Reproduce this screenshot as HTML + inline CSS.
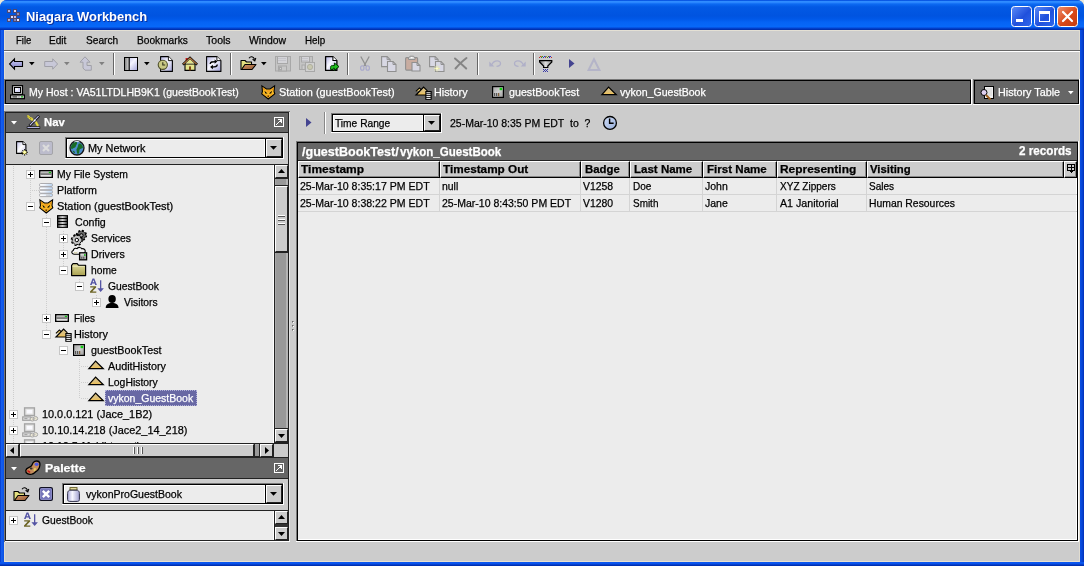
<!DOCTYPE html>
<html><head><meta charset="utf-8"><title>Niagara Workbench</title>
<style>
*{box-sizing:border-box;margin:0;padding:0}
html,body{width:1084px;height:566px;overflow:hidden;background:#ece9d8}
body{font-family:"Liberation Sans",sans-serif;font-size:11px;color:#000;position:relative}
.abs{position:absolute}
.t{white-space:nowrap;line-height:13px;font-size:11px;letter-spacing:-0.15px;filter:grayscale(1);-webkit-text-stroke:0.25px}
.w{color:#fff}
.b{font-weight:bold}
svg{display:block;overflow:visible}
.raised{background:#ccc;border-top:1px solid #fff;border-left:1px solid #fff;border-right:1px solid #222;border-bottom:1px solid #222}
.sunk{background:#ececec;border:2px solid #222}
.hc{background:#ccc;border-top:1px solid #fff;border-left:1px solid #fff;border-right:1px solid #000;border-bottom:1px solid #000;box-shadow:inset -1px -1px 0 #888}
</style></head><body>

<div class="abs " style="left:0px;top:0px;width:1084px;height:566px;background:#0a50e4;border-radius:7px 7px 0 0"></div>
<div class="abs " style="left:0px;top:30px;width:4px;height:536px;background:linear-gradient(90deg,#0236c8,#1560f0 40%,#0a4fe2)"></div>
<div class="abs " style="left:1080px;top:30px;width:4px;height:536px;background:linear-gradient(90deg,#0a4fe2,#0646d8 50%,#0230b8)"></div>
<div class="abs " style="left:0px;top:562px;width:1084px;height:4px;background:linear-gradient(#0a58f0,#0a52ea 45%,#0238c0 70%,#002aa4)"></div>
<div class="abs " style="left:0px;top:0px;width:1084px;height:30px;border-radius:7px 7px 0 0;background:linear-gradient(#0a55e0 0px,#0a5ae6 .6px,#2f8cff 1.5px,#2a86fe 2.5px,#0c6af2 4px,#0259e4 7px,#0054e0 16px,#0058e8 19px,#0563f4 22px,#0768f8 26.5px,#0550e0 27.8px,#0034b8 29px,#002ca8 30px)"></div>
<div class="abs" style="left:7px;top:9px"><svg width="14" height="14" viewBox="0 0 14 14" shape-rendering="crispEdges"><rect x="0" y="0" width="4" height="4" fill="#4c4870"/><rect x="1" y="1" width="2" height="2" fill="#b8b4e0"/><rect x="6" y="0" width="4" height="4" fill="#4c4870"/><rect x="7" y="1" width="2" height="2" fill="#dcdcf8"/><rect x="9" y="3" width="4" height="4" fill="#4c4870"/><rect x="10" y="4" width="2" height="2" fill="#8c88b8"/><rect x="3" y="6" width="4" height="4" fill="#4c4870"/><rect x="4" y="7" width="2" height="2" fill="#e0e0ff"/><rect x="6" y="6" width="4" height="4" fill="#4c4870"/><rect x="7" y="7" width="2" height="2" fill="#c0bce8"/><rect x="0" y="9" width="4" height="4" fill="#4c4870"/><rect x="1" y="10" width="2" height="2" fill="#b0ace0"/><rect x="6" y="9" width="4" height="4" fill="#4c4870"/><rect x="7" y="10" width="2" height="2" fill="#8884b4"/><rect x="9" y="9" width="4" height="4" fill="#4c4870"/><rect x="10" y="10" width="2" height="2" fill="#e8e8ff"/></svg></div>
<div class="abs" style="left:25.80px;top:8px;font-weight:bold;font-size:13.5px;line-height:18px;color:#fff;text-shadow:1px 1px 0 #0a2f9c;white-space:nowrap;transform-origin:0 0;transform:scaleX(0.9576)">Niagara Workbench</div>
<div class="abs" style="left:1011px;top:6px"><svg width="21" height="21" viewBox="0 0 21 21" ><defs><linearGradient id="g1" x1="0" y1="0" x2="1" y2="1"><stop offset="0" stop-color="#5c8cf8"/><stop offset="0.55" stop-color="#2050dc"/><stop offset="1" stop-color="#3068ec"/></linearGradient></defs><rect x=".5" y=".5" width="20" height="20" rx="3" fill="url(#g1)" stroke="#fff"/><rect x="5" y="13" width="7" height="3" fill="#fff"/></svg></div>
<div class="abs" style="left:1034px;top:6px"><svg width="21" height="21" viewBox="0 0 21 21" ><defs><linearGradient id="g2" x1="0" y1="0" x2="1" y2="1"><stop offset="0" stop-color="#5c8cf8"/><stop offset="0.55" stop-color="#2050dc"/><stop offset="1" stop-color="#3068ec"/></linearGradient></defs><rect x=".5" y=".5" width="20" height="20" rx="3" fill="url(#g2)" stroke="#fff"/><rect x="5.5" y="6.5" width="10" height="9" fill="none" stroke="#fff"/><rect x="5" y="5" width="11" height="3" fill="#fff"/></svg></div>
<div class="abs" style="left:1057px;top:6px"><svg width="21" height="21" viewBox="0 0 21 21" ><defs><linearGradient id="g3" x1="0" y1="0" x2="1" y2="1"><stop offset="0" stop-color="#f09070"/><stop offset="0.55" stop-color="#d84818"/><stop offset="1" stop-color="#c43c10"/></linearGradient></defs><rect x=".5" y=".5" width="20" height="20" rx="3" fill="url(#g3)" stroke="#fff"/><path d="M6 6L15 15M15 6L6 15" stroke="#fff" stroke-width="2.2" stroke-linecap="round"/></svg></div>
<div class="abs " style="left:4px;top:30px;width:1076px;height:532px;background:#ccc"></div>
<div class="abs " style="left:4px;top:30px;width:1076px;height:1px;background:#e4e0d4"></div>
<div class="abs " style="left:4px;top:561px;width:1076px;height:1px;background:#e8e0d0"></div>
<div class="abs " style="left:4px;top:30px;width:1px;height:532px;background:#e0dcd0"></div>
<div class="abs " style="left:1079px;top:30px;width:1px;height:532px;background:#e0dcd0"></div>
<div class="abs t " style="left:15.7px;top:33.99px;letter-spacing:0;transform-origin:0 0;transform:scaleX(0.8639);">File</div>
<div class="abs t " style="left:49.4px;top:33.99px;letter-spacing:0;transform-origin:0 0;transform:scaleX(0.9170);">Edit</div>
<div class="abs t " style="left:85.8px;top:33.99px;letter-spacing:0;transform-origin:0 0;transform:scaleX(0.9234);">Search</div>
<div class="abs t " style="left:136.5px;top:33.99px;letter-spacing:0;transform-origin:0 0;transform:scaleX(0.9236);">Bookmarks</div>
<div class="abs t " style="left:205.5px;top:33.99px;letter-spacing:0;transform-origin:0 0;transform:scaleX(0.9578);">Tools</div>
<div class="abs t " style="left:249.0px;top:33.99px;letter-spacing:0;transform-origin:0 0;transform:scaleX(0.9499);">Window</div>
<div class="abs t " style="left:304.8px;top:33.99px;letter-spacing:0;transform-origin:0 0;transform:scaleX(0.8936);">Help</div>
<div class="abs " style="left:4px;top:50px;width:1076px;height:1px;background:#666"></div>
<div class="abs " style="left:4px;top:51px;width:1076px;height:1px;background:#fff"></div>
<div class="abs" style="left:9px;top:58px"><svg width="15" height="12" viewBox="0 0 15 12" ><defs><linearGradient id="g4" x1="0" y1="0" x2="0" y2="1"><stop offset="0" stop-color="#d0d0ff"/><stop offset="0.5" stop-color="#a8a8e0"/><stop offset="1" stop-color="#7878b0"/></linearGradient></defs><path d="M0.6 6L5.5 0.8V3.5H13.5V8.5H5.5V11.2Z" fill="url(#g4)" stroke="#000" stroke-width="1.1" stroke-linejoin="miter"/></svg></div>
<div class="abs" style="left:29px;top:62px"><svg width="6" height="4"><path d="M0 0H5.6L2.8 3.3Z" fill="#000"/></svg></div>
<div class="abs" style="left:44px;top:58px"><svg width="15" height="12" viewBox="0 0 15 12" ><path d="M13.6 6L8.7 0.8V3.5H0.7V8.5H8.7V11.2Z" fill="#c8c8d8" stroke="#a0a0a8" stroke-width="1"/></svg></div>
<div class="abs" style="left:64px;top:62px"><svg width="6" height="4"><path d="M0 0H5.6L2.8 3.3Z" fill="#808080"/></svg></div>
<div class="abs" style="left:79px;top:56px"><svg width="14" height="15" viewBox="0 0 14 15" ><path d="M6 0.8L1 6.2H4V12L6 14.2H12.3V9.5H8V6.2H11Z" fill="#c8c8d8" stroke="#a0a0a8" stroke-width="1"/></svg></div>
<div class="abs" style="left:99px;top:62px"><svg width="6" height="4"><path d="M0 0H5.6L2.8 3.3Z" fill="#808080"/></svg></div>
<div class="abs " style="left:113px;top:53px;width:1px;height:22px;background:#666"></div>
<div class="abs " style="left:114px;top:53px;width:1px;height:22px;background:#fff"></div>
<div class="abs" style="left:124px;top:57px"><svg width="14" height="14" viewBox="0 0 14 14" ><defs><linearGradient id="g5" x1="0" y1="0" x2="1" y2="0"><stop offset="0" stop-color="#888"/><stop offset="1" stop-color="#d8d8d8"/></linearGradient></defs><defs><linearGradient id="g6" x1="0" y1="0" x2="1" y2="1"><stop offset="0" stop-color="#b8b8e8"/><stop offset="0.5" stop-color="#f4f4ff"/><stop offset="1" stop-color="#a8a8dc"/></linearGradient></defs><rect x=".5" y=".5" width="13" height="13" fill="url(#g6)" stroke="#000"/><rect x="1" y="1" width="4" height="12" fill="url(#g5)"/><path d="M5.2 0.5V13.5" stroke="#000" stroke-width="1.2"/></svg></div>
<div class="abs" style="left:144px;top:62px"><svg width="6" height="4"><path d="M0 0H5.6L2.8 3.3Z" fill="#000"/></svg></div>
<div class="abs" style="left:157px;top:56px"><svg width="16" height="17" viewBox="0 0 16 17" ><defs><linearGradient id="g7" x1="0" y1="0" x2="1" y2="1"><stop offset="0" stop-color="#b0b0e0"/><stop offset="0.45" stop-color="#f8f8ff"/><stop offset="1" stop-color="#a0a0d8"/></linearGradient></defs><g transform="translate(3,0)"><path d="M.6 .6H8.4 L12.4 4.6 V15.4 H.6Z" fill="url(#g7)" stroke="#000" stroke-width="1.1" stroke-linejoin="round"/><path d="M8.4 .6V4.6 H12.4" fill="#fff" stroke="#000" stroke-width="0.8800000000000001"/></g><circle cx="5.8" cy="8.8" r="4.6" fill="#c8c884" stroke="#50502c" stroke-width="1.1"/><path d="M5.8 6.2V9H8.2" stroke="#30301c" stroke-width="1.1" fill="none"/></svg></div>
<div class="abs" style="left:182px;top:57px"><svg width="16" height="15" viewBox="0 0 16 15" ><rect x="3.6" y="1" width="2.2" height="3.6" fill="#d01818"/><path d="M3 7H13V13.4H3Z" fill="#e4e48c" stroke="#000" stroke-width="1.1"/><path d="M.8 7.6L8 .9L15.2 7.6" fill="none" stroke="#000" stroke-width="2.3"/><path d="M1.3 7.2L8 1.1L14.7 7.2" fill="none" stroke="#b87840" stroke-width="1.1"/><path d="M8 2.3L3.6 6.4H12.4Z" fill="#e4e48c"/><rect x="7" y="9.4" width="2" height="4" fill="#804818"/></svg></div>
<div class="abs" style="left:206px;top:56px"><svg width="16" height="17" viewBox="0 0 16 17" ><defs><linearGradient id="g8" x1="0" y1="0" x2="1" y2="1"><stop offset="0" stop-color="#b0b0e0"/><stop offset="0.45" stop-color="#f8f8ff"/><stop offset="1" stop-color="#a0a0d8"/></linearGradient></defs><path d="M.6 .6H10.9 L14.9 4.6 V15.4 H.6Z" fill="url(#g8)" stroke="#000" stroke-width="1.1" stroke-linejoin="round"/><path d="M10.9 .6V4.6 H14.9" fill="#fff" stroke="#000" stroke-width="0.8800000000000001"/><path d="M4.2 8C4.2 5.8 6 5.6 10 5.6" fill="none" stroke="#000" stroke-width="1.3"/><path d="M8.6 3.4L11.4 5.6L8.6 7.8Z" fill="#000"/><path d="M11.3 8.5C11.3 10.8 9.5 11 5.5 11" fill="none" stroke="#000" stroke-width="1.3"/><path d="M6.9 8.8L4.1 11L6.9 13.2Z" fill="#000"/></svg></div>
<div class="abs " style="left:230px;top:53px;width:1px;height:22px;background:#666"></div>
<div class="abs " style="left:231px;top:53px;width:1px;height:22px;background:#fff"></div>
<div class="abs" style="left:240px;top:55px"><svg width="17" height="16" viewBox="0 0 17 16" ><defs><linearGradient id="g9" x1="0" y1="0" x2="1" y2="1"><stop offset="0" stop-color="#d89868"/><stop offset="1" stop-color="#8c5430"/></linearGradient></defs><path d="M1 5.5H5L6.5 7H11.5V14.5H1Z" fill="#e4e080" stroke="#000" stroke-width="1.1" stroke-linejoin="round"/><path d="M1.5 14.5L5 9.5H16L12 14.5Z" fill="url(#g9)" stroke="#000" stroke-width="1.1" stroke-linejoin="round"/><path d="M9 3.2C10.5 1 13.5 1.2 14.6 4.5" fill="none" stroke="#000" stroke-width="1.1"/><path d="M12.6 4.2L14.8 5.8L15.8 3" fill="none" stroke="#000" stroke-width="1.1"/></svg></div>
<div class="abs" style="left:261px;top:62px"><svg width="6" height="4"><path d="M0 0H5.6L2.8 3.3Z" fill="#000"/></svg></div>
<div class="abs" style="left:275px;top:56px"><svg width="16" height="16" viewBox="0 0 16 16" ><g fill="none" stroke="#a8a8a8"><rect x=".5" y=".5" width="15" height="14.5" fill="#c4c4c4"/><rect x="2.5" y=".5" width="10" height="7" fill="#d4d4d8"/><path d="M3.5 2.5H11.5M3.5 4.5H11.5" stroke="#b4b4bc" stroke-dasharray="1 1"/><rect x="3.5" y="10" width="8" height="5" fill="#c8c8c8"/><rect x="4.5" y="11" width="2" height="3.2" fill="#d8d8d8"/></g></svg></div>
<div class="abs" style="left:299px;top:56px"><svg width="16" height="16" viewBox="0 0 16 16" ><g fill="none" stroke="#a8a8a8"><rect x=".5" y=".5" width="13" height="13" fill="#c4c4c4"/><rect x="2.5" y=".5" width="8" height="5.5" fill="#d4d4d8"/><path d="M3.5 2.5H9.5M3.5 4.5H9.5" stroke="#b4b4bc" stroke-dasharray="1 1"/><rect x="3" y="9" width="3" height="4.5" fill="#ccc"/><rect x="6.5" y="6.5" width="9" height="9" fill="#d0d0d0"/><circle cx="11" cy="11" r="2.6" fill="#c8c8b0" stroke="#b0b0a0"/></g></svg></div>
<div class="abs" style="left:325px;top:56px"><svg width="16" height="16" viewBox="0 0 16 16" ><defs><linearGradient id="g11" x1="0" y1="0" x2="1" y2="1"><stop offset="0" stop-color="#b0b0e0"/><stop offset="0.45" stop-color="#f8f8ff"/><stop offset="1" stop-color="#a0a0d8"/></linearGradient></defs><path d="M.6 .6H7.9 L11.9 4.6 V14.4 H.6Z" fill="url(#g11)" stroke="#000" stroke-width="1.3" stroke-linejoin="round"/><path d="M7.9 .6V4.6 H11.9" fill="#fff" stroke="#000" stroke-width="1.04"/><path d="M5.6 13.5V11.3C5.6 10 6.4 9.6 7.4 9.6H9.4V7L14 10.6L9.4 14.4V12.2H8.2V13.5Z" fill="#20c020" stroke="#003800" stroke-width="1"/></svg></div>
<div class="abs " style="left:347px;top:53px;width:1px;height:22px;background:#666"></div>
<div class="abs " style="left:348px;top:53px;width:1px;height:22px;background:#fff"></div>
<div class="abs" style="left:360px;top:56px"><svg width="10" height="15" viewBox="0 0 10 15" ><path d="M0.8 0.5L6 10M9.2 0.5L4 10" stroke="#909090" stroke-width="1.3" fill="none"/><ellipse cx="2.3" cy="12" rx="1.7" ry="2.3" fill="none" stroke="#a8a8cc" stroke-width="1.1"/><ellipse cx="7.7" cy="12" rx="1.7" ry="2.3" fill="none" stroke="#a8a8cc" stroke-width="1.1"/></svg></div>
<div class="abs" style="left:381px;top:56px"><svg width="16" height="16" viewBox="0 0 16 16" ><path d="M0.6 0.6H6.1L9.1 3.6V10.6H0.6Z" fill="#d8d8e4" stroke="#909090" stroke-width="1.1"/><path d="M6.1 0.6V3.6H9.1" fill="none" stroke="#909090" stroke-width="1"/><path d="M6.5 5.5H12.0L15.0 8.5V15.5H6.5Z" fill="#d8d8e4" stroke="#909090" stroke-width="1.1"/><path d="M12.0 5.5V8.5H15.0" fill="none" stroke="#909090" stroke-width="1"/></svg></div>
<div class="abs" style="left:405px;top:55px"><svg width="16" height="17" viewBox="0 0 16 17" ><rect x=".6" y="2.6" width="12" height="12.5" rx="1" fill="#c8aca0" stroke="#909090" stroke-width="1.1"/><path d="M3.5 4.5V3L5 1.2H8.5L10 3V4.5Z" fill="#d8d8d8" stroke="#909090"/><rect x="6" y="2" width="1.5" height="1.2" fill="#fff"/><path d="M7 7.5H12L15 10.5V16.0H7Z" fill="#d8d8e4" stroke="#909090" stroke-width="1.1"/><path d="M12 7.5V10.5H15" fill="none" stroke="#909090" stroke-width="1"/></svg></div>
<div class="abs" style="left:429px;top:56px"><svg width="16" height="16" viewBox="0 0 16 16" ><path d="M0.6 0.6H6.1L9.1 3.6V10.6H0.6Z" fill="#d8d8e4" stroke="#909090" stroke-width="1.1"/><path d="M6.1 0.6V3.6H9.1" fill="none" stroke="#909090" stroke-width="1"/><path d="M6.5 5.5H12.0L15.0 8.5V15.5H6.5Z" fill="#d8d8e4" stroke="#909090" stroke-width="1.1"/><path d="M12.0 5.5V8.5H15.0" fill="none" stroke="#909090" stroke-width="1"/><path d="M8 9.5V15.5M5 12.5H11M5.8 10.3L10.2 14.7M10.2 10.3L5.8 14.7" stroke="#e8e8b0" stroke-width="1"/><circle cx="8" cy="12.5" r="1" fill="#ffffd0"/></svg></div>
<div class="abs" style="left:454px;top:57px"><svg width="14" height="13" viewBox="0 0 14 13" ><path d="M1 1.5C4 4 9 8.5 12.2 11.5M12.5 1C9 3.5 5 7.5 1.5 11.5" stroke="#848484" stroke-width="2" fill="none" stroke-linecap="round"/></svg></div>
<div class="abs " style="left:477px;top:53px;width:1px;height:22px;background:#666"></div>
<div class="abs " style="left:478px;top:53px;width:1px;height:22px;background:#fff"></div>
<div class="abs" style="left:489px;top:59px"><svg width="13" height="8" viewBox="0 0 13 8" ><path d="M3 5.5C5 0.8 11.5 1 11.5 4.5C11.5 6.5 9.5 7.3 7.5 7.3" fill="none" stroke="#b0b0c8" stroke-width="1.3"/><path d="M0.3 2.5V7.5H5.3Z" fill="#b0b0c8"/></svg></div>
<div class="abs" style="left:513px;top:59px"><svg width="13" height="8" viewBox="0 0 13 8" ><path d="M10 5.5C8 0.8 1.5 1 1.5 4.5C1.5 6.5 3.5 7.3 5.5 7.3" fill="none" stroke="#b0b0c8" stroke-width="1.3"/><path d="M12.7 2.5V7.5H7.7Z" fill="#b0b0c8"/></svg></div>
<div class="abs " style="left:533px;top:53px;width:1px;height:22px;background:#666"></div>
<div class="abs " style="left:534px;top:53px;width:1px;height:22px;background:#fff"></div>
<div class="abs" style="left:539px;top:56px"><svg width="14" height="17" viewBox="0 0 14 17" ><defs><linearGradient id="g12" x1="0" y1="0" x2="1" y2="0"><stop offset="0" stop-color="#707070"/><stop offset="0.5" stop-color="#e0e0e0"/><stop offset="1" stop-color="#909090"/></linearGradient></defs><g shape-rendering="crispEdges"><rect x="0" y="1" width="1" height="1" fill="#c03030"/><rect x="1" y="0" width="1" height="1" fill="#c03030"/><rect x="2" y="1" width="1" height="1" fill="#308030"/><rect x="3" y="0" width="1" height="1" fill="#308030"/><rect x="4" y="1" width="1" height="1" fill="#3030c0"/><rect x="5" y="0" width="1" height="1" fill="#3030c0"/><rect x="6" y="1" width="1" height="1" fill="#c03030"/><rect x="7" y="0" width="1" height="1" fill="#c08030"/><rect x="8" y="1" width="1" height="1" fill="#308030"/><rect x="9" y="0" width="1" height="1" fill="#308030"/><rect x="10" y="1" width="1" height="1" fill="#3030c0"/><rect x="11" y="0" width="1" height="1" fill="#3030c0"/><rect x="12" y="1" width="1" height="1" fill="#c03030"/><rect x="2" y="0" width="1" height="1" fill="#b0b030"/><rect x="6" y="0" width="1" height="1" fill="#30a0a0"/><rect x="10" y="0" width="1" height="1" fill="#a030a0"/><rect x="4" y="13" width="1" height="1" fill="#3838a8"/><rect x="6" y="13" width="1" height="1" fill="#3838a8"/><rect x="8" y="13" width="1" height="1" fill="#3838a8"/><rect x="5" y="14" width="1" height="1" fill="#3838a8"/><rect x="7" y="14" width="1" height="1" fill="#3838a8"/><rect x="4" y="15" width="1" height="1" fill="#3838a8"/><rect x="6" y="15" width="1" height="1" fill="#3838a8"/><rect x="8" y="15" width="1" height="1" fill="#3838a8"/></g><path d="M0.6 4.6H12.8V6L8.8 10V11.5H4.6V10L0.6 6Z" fill="url(#g12)" stroke="#000" stroke-width="1.2"/></svg></div>
<div class="abs" style="left:569px;top:59px"><svg width="6" height="9" viewBox="0 0 6 9" ><path d="M0 0V9L5.5 4.5Z" fill="#444490"/></svg></div>
<div class="abs" style="left:587px;top:57px"><svg width="14" height="14" viewBox="0 0 14 14" ><path d="M7 2.2L1.6 13H12.4Z" fill="none" stroke="#b4b4c8" stroke-width="2" stroke-linejoin="miter"/></svg></div>
<div class="abs " style="left:4px;top:79px;width:968px;height:26px;background:#fff"></div>
<div class="abs " style="left:4px;top:79px;width:967px;height:25px;background:#777"></div>
<div class="abs " style="left:5px;top:80px;width:966px;height:24px;background:#000"></div>
<div class="abs " style="left:6px;top:81px;width:964px;height:22px;background:#666"></div>
<div class="abs " style="left:973px;top:79px;width:107px;height:26px;background:#fff"></div>
<div class="abs " style="left:973px;top:79px;width:106px;height:25px;background:#777"></div>
<div class="abs " style="left:974px;top:80px;width:105px;height:24px;background:#000"></div>
<div class="abs " style="left:975px;top:81px;width:103px;height:22px;background:#666"></div>
<div class="abs" style="left:10px;top:85px"><svg width="15" height="15" viewBox="0 0 15 15" ><rect x="2.5" y=".6" width="10" height="8.8" fill="#d4d4d4" stroke="#000" stroke-width="1.2"/><rect x="4.5" y="2.5" width="6" height="5" fill="#d8d8f8" stroke="#000" stroke-width="1"/><rect x="5.4" y="3.3" width="2.6" height="2" fill="#fff"/><rect x=".6" y="10" width="13.8" height="3.7" fill="#dcdcdc" stroke="#000" stroke-width="1.2"/><rect x="2.4" y="11.4" width="4.6" height="1" fill="#202020"/><rect x="7.6" y="11.4" width="2.6" height="1" fill="#a0a0a0"/><rect x="11" y="11.2" width="2" height="1.3" fill="#10b010"/></svg></div>
<div class="abs t w" style="left:28.8px;top:85.99px;letter-spacing:0;transform-origin:0 0;transform:scaleX(0.9577);">My Host : VA51LTDLHB9K1 (guestBookTest)</div>
<div class="abs" style="left:260.6px;top:84.6px"><svg width="14.5" height="14.5" viewBox="0 0 16 16" ><path d="M1 1L6 4.4H10L15 1L14.4 7L15.2 9.8L8 15.4L.8 9.8L1.6 7Z" fill="#f8b824" stroke="#000" stroke-width="1.2" stroke-linejoin="miter"/><path d="M2.2 2.8L4.6 5L2.6 6Z" fill="#e48c18"/><path d="M13.8 2.8L11.4 5L13.4 6Z" fill="#e48c18"/><path d="M5.5 5.6H10.5L9 8H7Z" fill="#f0a020"/><path d="M3.8 6.3L7.2 9.4H4.8Z" fill="#000"/><path d="M12.2 6.3L8.8 9.4H11.2Z" fill="#000"/><path d="M3 10.4L8 12L13 10.4" fill="none" stroke="#e89c1c" stroke-width=".9"/><rect x="7.2" y="11.6" width="1.6" height="1.8" fill="#5c2c0c"/></svg></div>
<div class="abs t w" style="left:278.7px;top:85.99px;letter-spacing:0;transform-origin:0 0;transform:scaleX(0.9900);">Station (guestBookTest)</div>
<div class="abs" style="left:415px;top:84px"><svg width="17" height="17" viewBox="0 0 17 17" ><defs><linearGradient id="g13" x1="0" y1="0" x2="0" y2="1"><stop offset="0" stop-color="#d8c084"/><stop offset="0.6" stop-color="#dcc07c"/><stop offset="1" stop-color="#f4c450"/></linearGradient></defs><path d="M.9 7.4L4.4 3.9L7 6.4" fill="#e4c870" stroke="#000" stroke-width="1.1"/><path d="M1 11L8.6 3L12 6.4V11Z" fill="url(#g13)" stroke="#000" stroke-width="1.2" stroke-linejoin="miter"/><rect x="10.3" y="7" width="6.4" height="8.8" fill="#000"/><rect x="11.4" y="8.2" width="4.2" height="1.1" fill="#e4e4e4"/><rect x="11.4" y="10.1" width="4.2" height="1.1" fill="#e4e4e4"/><rect x="11.4" y="12" width="4.2" height="1.1" fill="#e4e4e4"/><rect x="11.4" y="13.9" width="4.2" height="1.1" fill="#e4e4e4"/></svg></div>
<div class="abs t w" style="left:434.4px;top:85.99px;letter-spacing:0;transform-origin:0 0;transform:scaleX(0.9822);">History</div>
<div class="abs" style="left:492px;top:86px"><svg width="12" height="12" viewBox="0 0 12 12" ><defs><linearGradient id="g14" x1="0" y1="0" x2="1" y2="1"><stop offset="0" stop-color="#a0a0a0"/><stop offset="0.5" stop-color="#d0d0d0"/><stop offset="1" stop-color="#989898"/></linearGradient></defs><rect x=".6" y=".6" width="10.8" height="10.8" fill="url(#g14)" stroke="#000" stroke-width="1.2"/><rect x="7.6" y="1.8" width="2.6" height="2.4" fill="#10d010"/><rect x="2.2" y="7" width="1" height="3.2" fill="#383838"/><rect x="4.2" y="7" width="1" height="3.2" fill="#383838"/><rect x="6.2" y="7" width="1" height="3.2" fill="#704818"/></svg></div>
<div class="abs t w" style="left:508.8px;top:85.99px;letter-spacing:0;transform-origin:0 0;transform:scaleX(0.9728);">guestBookTest</div>
<div class="abs" style="left:601px;top:86px"><svg width="16" height="10" viewBox="0 0 16 10" ><defs><linearGradient id="g15" x1="0" y1="0" x2="0" y2="1"><stop offset="0" stop-color="#d4bc80"/><stop offset="0.6" stop-color="#dcc07c"/><stop offset="1" stop-color="#f4c04c"/></linearGradient></defs><path d="M.9 8.7L7.6 1.1L15.3 8.7Z" fill="url(#g15)" stroke="#000" stroke-width="1.2" stroke-linejoin="miter"/></svg></div>
<div class="abs t w" style="left:620.0px;top:85.99px;letter-spacing:0;transform-origin:0 0;transform:scaleX(0.9606);">vykon_GuestBook</div>
<div class="abs" style="left:980px;top:86px"><svg width="15" height="15" viewBox="0 0 15 15" ><rect x="4.5" y=".5" width="9" height="12" fill="#f0f0f0" stroke="#000"/><path d="M6 3H12M6 5H12M6 7H12M6 9H12" stroke="#d0d0d0"/><circle cx="4" cy="6.5" r="3" fill="#e0d0f0" stroke="#000"/><path d="M6 9L10.5 13.5" stroke="#a06020" stroke-width="2"/></svg></div>
<div class="abs t w" style="left:997.8px;top:85.99px;letter-spacing:0;transform-origin:0 0;transform:scaleX(0.9785);">History Table</div>
<div class="abs" style="left:1068px;top:91px"><svg width="6" height="4"><path d="M0 0H5.6L2.8 3.2Z" fill="#fff"/></svg></div>
<div class="abs " style="left:4px;top:111px;width:286px;height:1px;background:#777"></div>
<div class="abs " style="left:4px;top:111px;width:1px;height:431px;background:#777"></div>
<div class="abs " style="left:5px;top:112px;width:284px;height:21px;background:#666;border:1px solid #222"></div>
<div class="abs" style="left:11px;top:121px"><svg width="6" height="4"><path d="M0 0H6L3 3.5Z" fill="#fff"/></svg></div>
<div class="abs" style="left:26px;top:115px"><svg width="15" height="14" viewBox="0 0 15 14" ><path d="M1.2 1.2C4 1.5 2.5 4 5.5 3.5C7 5 6 6 8 6.5" stroke="#e8dc40" stroke-width="2.2" fill="none"/><path d="M1.2 1.2C4 1.5 2.5 4 5.5 3.5" stroke="#605000" stroke-width=".6" fill="none" stroke-dasharray="1 1"/><path d="M9.5 7C11.5 8 10 10 12.5 10.8" stroke="#e8dc40" stroke-width="2.2" fill="none"/><path d="M13 .8L3.4 10.8" stroke="#000" stroke-width="2.6"/><path d="M12.6 1.2L3.8 10.4" stroke="#c4c4f4" stroke-width="1.2"/><circle cx="8.6" cy="5.4" r="1" fill="#fff"/><path d="M.8 12.6H14.2" stroke="#000" stroke-width="2.2"/><path d="M1.4 12.5H13.6" stroke="#c4c4f8" stroke-width=".9"/></svg></div>
<div class="abs t w b" style="left:44.3px;top:115.99px;letter-spacing:0;transform-origin:0 0;transform:scaleX(1.0255);">Nav</div>
<div class="abs" style="left:274px;top:117px"><svg width="10" height="10" viewBox="0 0 10 10" ><g shape-rendering="crispEdges"><rect x=".5" y=".5" width="9" height="9" fill="#666" stroke="#fff"/><rect x="2" y="7" width="1" height="1" fill="#fff"/><rect x="3" y="6" width="1" height="1" fill="#fff"/><rect x="4" y="5" width="1" height="1" fill="#fff"/><rect x="5" y="4" width="1" height="1" fill="#fff"/><rect x="6" y="3" width="1" height="1" fill="#fff"/><rect x="4" y="2" width="1" height="1" fill="#fff"/><rect x="5" y="2" width="1" height="1" fill="#fff"/><rect x="6" y="2" width="1" height="1" fill="#fff"/><rect x="7" y="2" width="1" height="1" fill="#fff"/><rect x="7" y="3" width="1" height="1" fill="#fff"/><rect x="7" y="4" width="1" height="1" fill="#fff"/><rect x="7" y="5" width="1" height="1" fill="#fff"/><rect x="6" y="4" width="1" height="1" fill="#fff"/></g></svg></div>
<div class="abs " style="left:5px;top:133px;width:1px;height:408px;background:#222"></div>
<div class="abs " style="left:288px;top:133px;width:1px;height:408px;background:#222"></div>
<div class="abs " style="left:289px;top:112px;width:1px;height:429px;background:#e4e4e4"></div>
<div class="abs" style="left:16px;top:141px"><svg width="13" height="15" viewBox="0 0 13 15" ><defs><linearGradient id="g16" x1="0" y1="0" x2="1" y2="1"><stop offset="0" stop-color="#c0c0e8"/><stop offset="0.5" stop-color="#fff"/><stop offset="1" stop-color="#b8b8e0"/></linearGradient></defs><path d="M.6 .6H6.9 L9.9 3.6 V12.4 H.6Z" fill="url(#g16)" stroke="#000" stroke-width="1.1" stroke-linejoin="round"/><path d="M6.9 .6V3.6 H9.9" fill="#fff" stroke="#000" stroke-width="0.8800000000000001"/><path d="M8.6 8V14.6M5.3 11.3H11.9M6.3 9L10.9 13.6M10.9 9L6.3 13.6" stroke="#000" stroke-width=".9"/><path d="M8.6 9.3V13.3M6.6 11.3H10.6M7.3 10L9.9 12.6M9.9 10L7.3 12.6" stroke="#f0e850" stroke-width="1"/><circle cx="8.6" cy="11.3" r="1.2" fill="#ffffc0"/></svg></div>
<div class="abs" style="left:39px;top:141px"><svg width="14" height="14" viewBox="0 0 14 14" ><rect x=".5" y=".5" width="13" height="13" rx="1.5" fill="#bcbccc" stroke="#a4a4a8"/><path d="M4 4L10 10M10 4L4 10" stroke="#dcdcdc" stroke-width="2.2"/></svg></div>
<div class="abs " style="left:65px;top:137px;width:218px;height:21px;background:#777"></div>
<div class="abs " style="left:66px;top:138px;width:217px;height:20px;background:#000"></div>
<div class="abs " style="left:67px;top:139px;width:215px;height:18px;background:#ececec;border-top:1px solid #fff;border-left:1px solid #fff"></div>
<div class="abs " style="left:65px;top:158px;width:219px;height:1px;background:#fff"></div>
<div class="abs " style="left:283px;top:137px;width:1px;height:22px;background:#fff"></div>
<div class="abs " style="left:264px;top:139px;width:1px;height:18px;background:#fff"></div>
<div class="abs " style="left:265px;top:139px;width:1px;height:18px;background:#000"></div>
<div class="abs raised" style="left:266px;top:139px;width:16px;height:18px;"></div>
<div class="abs" style="left:270px;top:146px"><svg width="7" height="4"><path d="M0 0H7L3.5 3.7Z" fill="#000"/></svg></div>
<div class="abs" style="left:69px;top:140px"><svg width="16" height="16" viewBox="0 0 16 16" ><circle cx="8" cy="8" r="7" fill="#4c8ccc" stroke="#181818" stroke-width="1.3"/><path d="M3 4.6C4 2.3 7 1.4 8 2.4C8.6 4.4 6.6 5 6.6 7C5 8.6 3.4 8 3 9.6C1.4 8.6 1.8 6 3 4.6Z" fill="#186c28"/><path d="M9.6 3.8C11.6 2.8 13.6 4.8 14 7.4C13.2 9 11.6 8 10.6 9.6C10 11.6 11 13 9 14.2C7.4 13.6 8 11 7.4 9.6C8.4 8 9 6 9.6 3.8Z" fill="#186c28"/><path d="M3.6 10.8C5 10.4 6 11.6 6 13.2C5 13.2 4 12.2 3.6 10.8Z" fill="#186c28"/><path d="M5.4 1.9C7 1.2 9 1.2 10.4 1.9" stroke="#e8f4ff" stroke-width="1" fill="none"/></svg></div>
<div class="abs t " style="left:88.3px;top:141.99px;letter-spacing:0;transform-origin:0 0;transform:scaleX(0.9891);">My Network</div>
<div class="abs " style="left:6px;top:164px;width:282px;height:1px;background:#222"></div>
<div class="abs " style="left:6px;top:165px;width:267px;height:278px;background:#ececec"></div>
<div class="abs " style="left:273px;top:165px;width:1px;height:278px;background:#fff"></div>
<div class="abs " style="left:274px;top:165px;width:1px;height:278px;background:#222"></div>
<div class="abs " style="left:13px;top:165px;width:1px;height:278px;background:repeating-linear-gradient(#ececec 0 1px,#cdcdcd 1px 2px)"></div>
<div class="abs " style="left:30px;top:165px;width:1px;height:41px;background:repeating-linear-gradient(#ececec 0 1px,#cdcdcd 1px 2px)"></div>
<div class="abs " style="left:46px;top:214px;width:1px;height:120px;background:repeating-linear-gradient(#ececec 0 1px,#cdcdcd 1px 2px)"></div>
<div class="abs " style="left:63px;top:230px;width:1px;height:40px;background:repeating-linear-gradient(#ececec 0 1px,#cdcdcd 1px 2px)"></div>
<div class="abs " style="left:79px;top:278px;width:1px;height:8px;background:repeating-linear-gradient(#ececec 0 1px,#cdcdcd 1px 2px)"></div>
<div class="abs " style="left:96px;top:294px;width:1px;height:8px;background:repeating-linear-gradient(#ececec 0 1px,#cdcdcd 1px 2px)"></div>
<div class="abs " style="left:79px;top:358px;width:1px;height:40px;background:repeating-linear-gradient(#ececec 0 1px,#cdcdcd 1px 2px)"></div>
<div class="abs " style="left:80px;top:366px;width:8px;height:1px;background:repeating-linear-gradient(90deg,#ececec 0 1px,#cdcdcd 1px 2px)"></div>
<div class="abs " style="left:80px;top:382px;width:8px;height:1px;background:repeating-linear-gradient(90deg,#ececec 0 1px,#cdcdcd 1px 2px)"></div>
<div class="abs " style="left:80px;top:398px;width:8px;height:1px;background:repeating-linear-gradient(90deg,#ececec 0 1px,#cdcdcd 1px 2px)"></div>
<div class="abs " style="left:31px;top:190px;width:8px;height:1px;background:repeating-linear-gradient(90deg,#ececec 0 1px,#cdcdcd 1px 2px)"></div>
<div class="abs" style="left:26px;top:170px"><svg width="9" height="9"><rect x=".5" y=".5" width="8" height="8" fill="#fff" stroke="#999" stroke-dasharray="1 1"/><path d="M2 4.5H7 M4.5 2V7" stroke="#000" stroke-width="1" fill="none" shape-rendering="crispEdges"/></svg></div>
<div class="abs" style="left:39px;top:170px"><svg width="14" height="8" viewBox="0 0 14 8" ><rect x=".7" y=".7" width="12.6" height="6.6" fill="#b4b4b4" stroke="#000" stroke-width="1.4"/><rect x="1.6" y="1.5" width="10.8" height="2" fill="#b8b8b8"/><rect x="1.6" y="4.6" width="10.8" height="2" fill="#e4e4e4"/><path d="M2 4.1H12" stroke="#484848" stroke-width="1"/><rect x="9.8" y="1.8" width="2.2" height="1.3" fill="#10c010"/></svg></div>
<div class="abs t " style="left:57.3px;top:167.99px;letter-spacing:0;transform-origin:0 0;transform:scaleX(0.9430);">My File System</div>
<div class="abs" style="left:38px;top:182px"><svg width="16" height="16" viewBox="0 0 16 16" ><defs><linearGradient id="g17" x1="0" y1="0" x2="1" y2="0"><stop offset="0" stop-color="#ffffff"/><stop offset="0.35" stop-color="#f4f8ff"/><stop offset="1" stop-color="#b8d4f4"/></linearGradient></defs><rect x="1.5" y="1.5" width="13" height="2.9" rx="1.2" fill="url(#g17)" stroke="#a4a4a8" stroke-width=".9"/><rect x="1.5" y="4.9" width="13" height="2.9" rx="1.2" fill="url(#g17)" stroke="#a4a4a8" stroke-width=".9"/><rect x="1.5" y="8.3" width="13" height="2.9" rx="1.2" fill="url(#g17)" stroke="#a4a4a8" stroke-width=".9"/><rect x="1.5" y="11.7" width="13" height="2.9" rx="1.2" fill="url(#g17)" stroke="#a4a4a8" stroke-width=".9"/><path d="M8.5 13.2H12" stroke="#c0a890" stroke-width="1" stroke-dasharray="1 1"/></svg></div>
<div class="abs t " style="left:57.3px;top:183.99px;letter-spacing:0;transform-origin:0 0;transform:scaleX(0.9713);">Platform</div>
<div class="abs" style="left:26px;top:202px"><svg width="9" height="9"><rect x=".5" y=".5" width="8" height="8" fill="#fff" stroke="#999" stroke-dasharray="1 1"/><path d="M2 4.5H7" stroke="#000" stroke-width="1" fill="none" shape-rendering="crispEdges"/></svg></div>
<div class="abs" style="left:39px;top:199px"><svg width="14.5" height="14.5" viewBox="0 0 16 16" ><path d="M1 1L6 4.4H10L15 1L14.4 7L15.2 9.8L8 15.4L.8 9.8L1.6 7Z" fill="#f8b824" stroke="#000" stroke-width="1.2" stroke-linejoin="miter"/><path d="M2.2 2.8L4.6 5L2.6 6Z" fill="#e48c18"/><path d="M13.8 2.8L11.4 5L13.4 6Z" fill="#e48c18"/><path d="M5.5 5.6H10.5L9 8H7Z" fill="#f0a020"/><path d="M3.8 6.3L7.2 9.4H4.8Z" fill="#000"/><path d="M12.2 6.3L8.8 9.4H11.2Z" fill="#000"/><path d="M3 10.4L8 12L13 10.4" fill="none" stroke="#e89c1c" stroke-width=".9"/><rect x="7.2" y="11.6" width="1.6" height="1.8" fill="#5c2c0c"/></svg></div>
<div class="abs t " style="left:57.3px;top:199.99px;letter-spacing:0;transform-origin:0 0;transform:scaleX(0.9952);">Station (guestBookTest)</div>
<div class="abs" style="left:42px;top:218px"><svg width="9" height="9"><rect x=".5" y=".5" width="8" height="8" fill="#fff" stroke="#999" stroke-dasharray="1 1"/><path d="M2 4.5H7" stroke="#000" stroke-width="1" fill="none" shape-rendering="crispEdges"/></svg></div>
<div class="abs" style="left:55px;top:214px"><svg width="16" height="16" viewBox="0 0 16 16" ><defs><linearGradient id="g18" x1="0" y1="0" x2="1" y2="0"><stop offset="0" stop-color="#383838"/><stop offset="0.3" stop-color="#a8a8a8"/><stop offset="0.5" stop-color="#d4d4d4"/><stop offset="0.7" stop-color="#a8a8a8"/><stop offset="1" stop-color="#383838"/></linearGradient></defs><rect x="2" y="1.1" width="11" height="12.8" fill="#000"/><rect x="3" y="2.1" width="9" height="1.95" fill="url(#g18)"/><rect x="3" y="5.05" width="9" height="1.95" fill="url(#g18)"/><rect x="3" y="8" width="9" height="1.95" fill="url(#g18)"/><rect x="3" y="10.95" width="9" height="1.95" fill="url(#g18)"/></svg></div>
<div class="abs t " style="left:74.7px;top:215.99px;letter-spacing:0;transform-origin:0 0;transform:scaleX(0.9657);">Config</div>
<div class="abs" style="left:59px;top:234px"><svg width="9" height="9"><rect x=".5" y=".5" width="8" height="8" fill="#fff" stroke="#999" stroke-dasharray="1 1"/><path d="M2 4.5H7 M4.5 2V7" stroke="#000" stroke-width="1" fill="none" shape-rendering="crispEdges"/></svg></div>
<div class="abs" style="left:71px;top:230px"><svg width="17" height="16" viewBox="0 0 17 16" ><circle cx="10.4" cy="5.4" r="4.800000000000001" fill="none" stroke="#000" stroke-width="1.8" stroke-dasharray="1.885 1.885"/><circle cx="10.4" cy="5.4" r="4.2" fill="#6c6c6c" stroke="#000" stroke-width="1"/><circle cx="10.4" cy="5.4" r="3.5000000000000004" fill="none" stroke="#6c6c6c" stroke-width="1.4" stroke-dasharray="1.508 1.508"/><circle cx="10.4" cy="5.4" r="1.7" fill="#b0b0b0" stroke="#000" stroke-width="1"/><circle cx="5.8" cy="10" r="5.2" fill="none" stroke="#000" stroke-width="1.8" stroke-dasharray="2.042 2.042"/><circle cx="5.8" cy="10" r="4.6" fill="#c0c0c0" stroke="#000" stroke-width="1"/><circle cx="5.8" cy="10" r="3.9" fill="none" stroke="#c0c0c0" stroke-width="1.4" stroke-dasharray="1.634 1.634"/><circle cx="5.8" cy="10" r="1.7" fill="#fff" stroke="#000" stroke-width="1"/></svg></div>
<div class="abs t " style="left:90.5px;top:231.99px;letter-spacing:0;transform-origin:0 0;transform:scaleX(0.9458);">Services</div>
<div class="abs" style="left:59px;top:250px"><svg width="9" height="9"><rect x=".5" y=".5" width="8" height="8" fill="#fff" stroke="#999" stroke-dasharray="1 1"/><path d="M2 4.5H7 M4.5 2V7" stroke="#000" stroke-width="1" fill="none" shape-rendering="crispEdges"/></svg></div>
<div class="abs" style="left:71px;top:246px"><svg width="17" height="16" viewBox="0 0 17 16" ><path d="M3 8.2C.2 7.6 .2 5.4 2.2 4.6C2.4 2.6 4.6 1.6 6 2.6C7.5 .8 10 1.2 10.8 2.8C12.6 2.2 14.6 3.6 14.2 5.6C13.5 8 11 8.2 9 8.2Z" fill="#f4f4f4" stroke="#000" stroke-width="1.1"/><path d="M3 6.6C4.2 7.2 5.6 7 6.4 6.2" stroke="#c8c088" stroke-width="1" fill="none"/><rect x="8.6" y="6.8" width="7" height="7" fill="#b4b4b4" stroke="#000" stroke-width="1.3"/><rect x="9.6" y="7.8" width="5" height="1.6" fill="#d4d4d4"/><rect x="13" y="8.2" width="1.6" height="1.6" fill="#10b010"/><path d="M10.8 10.8V12.8M12.8 10.8V12.8" stroke="#404040" stroke-width="1"/></svg></div>
<div class="abs t " style="left:90.5px;top:247.99px;letter-spacing:0;transform-origin:0 0;transform:scaleX(0.9680);">Drivers</div>
<div class="abs" style="left:59px;top:266px"><svg width="9" height="9"><rect x=".5" y=".5" width="8" height="8" fill="#fff" stroke="#999" stroke-dasharray="1 1"/><path d="M2 4.5H7" stroke="#000" stroke-width="1" fill="none" shape-rendering="crispEdges"/></svg></div>
<div class="abs" style="left:71px;top:263px"><svg width="16" height="14" viewBox="0 0 16 14" ><defs><linearGradient id="g19" x1="0" y1="0" x2="0" y2="1"><stop offset="0" stop-color="#e4e0a0"/><stop offset="1" stop-color="#a8a050"/></linearGradient></defs><path d="M.6 2.3L2 .7H6.2L7.6 2.3H14.6V12.6H.6Z" fill="url(#g19)" stroke="#000" stroke-width="1.2" stroke-linejoin="round"/><path d="M1.5 3.3H13.7" stroke="#ece8b8" stroke-width="1"/></svg></div>
<div class="abs t " style="left:90.5px;top:263.99px;letter-spacing:0;transform-origin:0 0;transform:scaleX(0.9345);">home</div>
<div class="abs" style="left:75px;top:282px"><svg width="9" height="9"><rect x=".5" y=".5" width="8" height="8" fill="#fff" stroke="#999" stroke-dasharray="1 1"/><path d="M2 4.5H7" stroke="#000" stroke-width="1" fill="none" shape-rendering="crispEdges"/></svg></div>
<div class="abs" style="left:88px;top:278px"><svg width="16" height="16" viewBox="0 0 16 16" ><path fill-rule="evenodd" d="M2 6.9L4.6 .5H6.3L8.9 6.9H7.2L6.75 5.6H4.15L3.7 6.9ZM4.6 4.3H6.3L5.45 1.9Z" fill="#5454a4"/><path d="M2.2 8.3H8.1V9.5L4.3 13.4H8.3V14.7H2V13.5L5.8 9.6H2.2Z" fill="#6c6424"/><path d="M12 2.2H13.3V10.2H15.9L12.65 13.9L9.4 10.2H12Z" fill="#5454a4"/></svg></div>
<div class="abs t " style="left:108.0px;top:279.99px;letter-spacing:0;transform-origin:0 0;transform:scaleX(0.9366);">GuestBook</div>
<div class="abs" style="left:92px;top:298px"><svg width="9" height="9"><rect x=".5" y=".5" width="8" height="8" fill="#fff" stroke="#999" stroke-dasharray="1 1"/><path d="M2 4.5H7 M4.5 2V7" stroke="#000" stroke-width="1" fill="none" shape-rendering="crispEdges"/></svg></div>
<div class="abs" style="left:105px;top:294px"><svg width="16" height="16" viewBox="0 0 16 16" ><ellipse cx="7.1" cy="5" rx="3.7" ry="4.1" fill="#000"/><path d="M.7 13.9C.7 10.4 3 8.9 7.1 8.9C11.2 8.9 13.5 10.4 13.5 13.9Z" fill="#000"/></svg></div>
<div class="abs t " style="left:123.7px;top:295.99px;letter-spacing:0;transform-origin:0 0;transform:scaleX(0.9398);">Visitors</div>
<div class="abs" style="left:42px;top:314px"><svg width="9" height="9"><rect x=".5" y=".5" width="8" height="8" fill="#fff" stroke="#999" stroke-dasharray="1 1"/><path d="M2 4.5H7 M4.5 2V7" stroke="#000" stroke-width="1" fill="none" shape-rendering="crispEdges"/></svg></div>
<div class="abs" style="left:55px;top:314px"><svg width="14" height="8" viewBox="0 0 14 8" ><rect x=".7" y=".7" width="12.6" height="6.6" fill="#b4b4b4" stroke="#000" stroke-width="1.4"/><rect x="1.6" y="1.5" width="10.8" height="2" fill="#b8b8b8"/><rect x="1.6" y="4.6" width="10.8" height="2" fill="#e4e4e4"/><path d="M2 4.1H12" stroke="#484848" stroke-width="1"/><rect x="9.8" y="1.8" width="2.2" height="1.3" fill="#10c010"/></svg></div>
<div class="abs t " style="left:74.4px;top:311.99px;letter-spacing:0;transform-origin:0 0;transform:scaleX(0.9091);">Files</div>
<div class="abs" style="left:42px;top:330px"><svg width="9" height="9"><rect x=".5" y=".5" width="8" height="8" fill="#fff" stroke="#999" stroke-dasharray="1 1"/><path d="M2 4.5H7" stroke="#000" stroke-width="1" fill="none" shape-rendering="crispEdges"/></svg></div>
<div class="abs" style="left:55px;top:326px"><svg width="17" height="17" viewBox="0 0 17 17" ><defs><linearGradient id="g13" x1="0" y1="0" x2="0" y2="1"><stop offset="0" stop-color="#d8c084"/><stop offset="0.6" stop-color="#dcc07c"/><stop offset="1" stop-color="#f4c450"/></linearGradient></defs><path d="M.9 7.4L4.4 3.9L7 6.4" fill="#e4c870" stroke="#000" stroke-width="1.1"/><path d="M1 11L8.6 3L12 6.4V11Z" fill="url(#g13)" stroke="#000" stroke-width="1.2" stroke-linejoin="miter"/><rect x="10.3" y="7" width="6.4" height="8.8" fill="#000"/><rect x="11.4" y="8.2" width="4.2" height="1.1" fill="#e4e4e4"/><rect x="11.4" y="10.1" width="4.2" height="1.1" fill="#e4e4e4"/><rect x="11.4" y="12" width="4.2" height="1.1" fill="#e4e4e4"/><rect x="11.4" y="13.9" width="4.2" height="1.1" fill="#e4e4e4"/></svg></div>
<div class="abs t " style="left:74.4px;top:327.99px;letter-spacing:0;transform-origin:0 0;transform:scaleX(0.9909);">History</div>
<div class="abs" style="left:59px;top:346px"><svg width="9" height="9"><rect x=".5" y=".5" width="8" height="8" fill="#fff" stroke="#999" stroke-dasharray="1 1"/><path d="M2 4.5H7" stroke="#000" stroke-width="1" fill="none" shape-rendering="crispEdges"/></svg></div>
<div class="abs" style="left:73px;top:344px"><svg width="12" height="12" viewBox="0 0 12 12" ><defs><linearGradient id="g14" x1="0" y1="0" x2="1" y2="1"><stop offset="0" stop-color="#a0a0a0"/><stop offset="0.5" stop-color="#d0d0d0"/><stop offset="1" stop-color="#989898"/></linearGradient></defs><rect x=".6" y=".6" width="10.8" height="10.8" fill="url(#g14)" stroke="#000" stroke-width="1.2"/><rect x="7.6" y="1.8" width="2.6" height="2.4" fill="#10d010"/><rect x="2.2" y="7" width="1" height="3.2" fill="#383838"/><rect x="4.2" y="7" width="1" height="3.2" fill="#383838"/><rect x="6.2" y="7" width="1" height="3.2" fill="#704818"/></svg></div>
<div class="abs t " style="left:90.5px;top:343.99px;letter-spacing:0;transform-origin:0 0;transform:scaleX(0.9770);">guestBookTest</div>
<div class="abs" style="left:88px;top:360px"><svg width="16" height="10" viewBox="0 0 16 10" ><defs><linearGradient id="g15" x1="0" y1="0" x2="0" y2="1"><stop offset="0" stop-color="#d4bc80"/><stop offset="0.6" stop-color="#dcc07c"/><stop offset="1" stop-color="#f4c04c"/></linearGradient></defs><path d="M.9 8.7L7.6 1.1L15.3 8.7Z" fill="url(#g15)" stroke="#000" stroke-width="1.2" stroke-linejoin="miter"/></svg></div>
<div class="abs t " style="left:108.0px;top:359.99px;letter-spacing:0;transform-origin:0 0;transform:scaleX(0.9782);">AuditHistory</div>
<div class="abs" style="left:88px;top:376px"><svg width="16" height="10" viewBox="0 0 16 10" ><defs><linearGradient id="g15" x1="0" y1="0" x2="0" y2="1"><stop offset="0" stop-color="#d4bc80"/><stop offset="0.6" stop-color="#dcc07c"/><stop offset="1" stop-color="#f4c04c"/></linearGradient></defs><path d="M.9 8.7L7.6 1.1L15.3 8.7Z" fill="url(#g15)" stroke="#000" stroke-width="1.2" stroke-linejoin="miter"/></svg></div>
<div class="abs t " style="left:108.0px;top:375.99px;letter-spacing:0;transform-origin:0 0;transform:scaleX(0.9471);">LogHistory</div>
<div class="abs " style="left:105px;top:390px;width:92px;height:16px;background:#6868a4;outline:1px dotted #b0b0d8;outline-offset:-1px"></div>
<div class="abs" style="left:88px;top:392px"><svg width="16" height="10" viewBox="0 0 16 10" ><defs><linearGradient id="g15" x1="0" y1="0" x2="0" y2="1"><stop offset="0" stop-color="#d4bc80"/><stop offset="0.6" stop-color="#dcc07c"/><stop offset="1" stop-color="#f4c04c"/></linearGradient></defs><path d="M.9 8.7L7.6 1.1L15.3 8.7Z" fill="url(#g15)" stroke="#000" stroke-width="1.2" stroke-linejoin="miter"/></svg></div>
<div class="abs t w" style="left:108.2px;top:391.99px;letter-spacing:0;transform-origin:0 0;transform:scaleX(0.9539);">vykon_GuestBook</div>
<div class="abs" style="left:9px;top:410px"><svg width="9" height="9"><rect x=".5" y=".5" width="8" height="8" fill="#fff" stroke="#999" stroke-dasharray="1 1"/><path d="M2 4.5H7 M4.5 2V7" stroke="#000" stroke-width="1" fill="none" shape-rendering="crispEdges"/></svg></div>
<div class="abs" style="left:22px;top:406px"><svg width="17" height="16" viewBox="0 0 17 16" ><rect x="2.6" y="1.9" width="9.8" height="7.6" fill="#e4e4e4" stroke="#a4a4a4" stroke-width="1.4"/><rect x="4.7" y="3.9" width="5.6" height="3.6" fill="#fafaff"/><rect x=".7" y="10.9" width="8" height="3.4" fill="#e0e0e0" stroke="#a4a4a4" stroke-width="1.2"/><path d="M2.4 12.6H5.4" stroke="#a0a0a0" stroke-width="1"/><ellipse cx="10.3" cy="13.1" rx="2.3" ry="1.9" fill="#ece8d4" stroke="#a8a8a8" stroke-width="1"/><ellipse cx="13.5" cy="12.5" rx="2.2" ry="2" fill="#ece8d4" stroke="#a8a8a8" stroke-width="1"/><path d="M10 13.4L13.6 12.2" stroke="#b0b0b0" stroke-width=".8"/></svg></div>
<div class="abs t " style="left:42.3px;top:407.99px;letter-spacing:0;transform-origin:0 0;transform:scaleX(0.9890);">10.0.0.121 (Jace_1B2)</div>
<div class="abs" style="left:9px;top:426px"><svg width="9" height="9"><rect x=".5" y=".5" width="8" height="8" fill="#fff" stroke="#999" stroke-dasharray="1 1"/><path d="M2 4.5H7 M4.5 2V7" stroke="#000" stroke-width="1" fill="none" shape-rendering="crispEdges"/></svg></div>
<div class="abs" style="left:22px;top:422px"><svg width="17" height="16" viewBox="0 0 17 16" ><rect x="2.6" y="1.9" width="9.8" height="7.6" fill="#e4e4e4" stroke="#a4a4a4" stroke-width="1.4"/><rect x="4.7" y="3.9" width="5.6" height="3.6" fill="#fafaff"/><rect x=".7" y="10.9" width="8" height="3.4" fill="#e0e0e0" stroke="#a4a4a4" stroke-width="1.2"/><path d="M2.4 12.6H5.4" stroke="#a0a0a0" stroke-width="1"/><ellipse cx="10.3" cy="13.1" rx="2.3" ry="1.9" fill="#ece8d4" stroke="#a8a8a8" stroke-width="1"/><ellipse cx="13.5" cy="12.5" rx="2.2" ry="2" fill="#ece8d4" stroke="#a8a8a8" stroke-width="1"/><path d="M10 13.4L13.6 12.2" stroke="#b0b0b0" stroke-width=".8"/></svg></div>
<div class="abs t " style="left:42.3px;top:423.99px;letter-spacing:0;transform-origin:0 0;transform:scaleX(0.9905);">10.10.14.218 (Jace2_14_218)</div>
<div class="abs" style="left:6px;top:437px;width:267px;height:6px;overflow:hidden"><div class="abs" style="left:16px;top:1px"><svg width="17" height="16" viewBox="0 0 17 16" ><rect x="2.6" y="1.9" width="9.8" height="7.6" fill="#e4e4e4" stroke="#a4a4a4" stroke-width="1.4"/><rect x="4.7" y="3.9" width="5.6" height="3.6" fill="#fafaff"/><rect x=".7" y="10.9" width="8" height="3.4" fill="#e0e0e0" stroke="#a4a4a4" stroke-width="1.2"/><path d="M2.4 12.6H5.4" stroke="#a0a0a0" stroke-width="1"/><ellipse cx="10.3" cy="13.1" rx="2.3" ry="1.9" fill="#ece8d4" stroke="#a8a8a8" stroke-width="1"/><ellipse cx="13.5" cy="12.5" rx="2.2" ry="2" fill="#ece8d4" stroke="#a8a8a8" stroke-width="1"/><path d="M10 13.4L13.6 12.2" stroke="#b0b0b0" stroke-width=".8"/></svg></div><div class="abs t" style="left:36px;top:3px">10.10.5.11 (dhtmont)</div></div>
<div class="abs " style="left:275px;top:165px;width:13px;height:278px;background:#222"></div>
<div class="abs " style="left:275px;top:179px;width:13px;height:6px;background:linear-gradient(90deg,#aaa 0 1px,#999 1px 11px,#b4b4b4 11px)"></div>
<div class="abs " style="left:275px;top:253px;width:13px;height:175px;background:linear-gradient(90deg,#aaa 0 1px,#999 1px 11px,#b4b4b4 11px)"></div>
<div class="abs raised" style="left:275px;top:165px;width:13px;height:13px;"></div>
<div class="abs" style="left:278px;top:169px"><svg width="7" height="4"><path d="M0 4H7L3.5 0Z" fill="#000"/></svg></div>
<div class="abs raised" style="left:275px;top:186px;width:13px;height:66px;"></div>
<div class="abs " style="left:278px;top:215px;width:7px;height:1px;background:#fff"></div>
<div class="abs " style="left:278px;top:216px;width:7px;height:1px;background:#555"></div>
<div class="abs " style="left:278px;top:219px;width:7px;height:1px;background:#fff"></div>
<div class="abs " style="left:278px;top:220px;width:7px;height:1px;background:#555"></div>
<div class="abs " style="left:278px;top:223px;width:7px;height:1px;background:#fff"></div>
<div class="abs " style="left:278px;top:224px;width:7px;height:1px;background:#555"></div>
<div class="abs raised" style="left:275px;top:429px;width:13px;height:13px;"></div>
<div class="abs" style="left:278px;top:434px"><svg width="7" height="4"><path d="M0 0H7L3.5 4Z" fill="#000"/></svg></div>
<div class="abs " style="left:6px;top:443px;width:282px;height:1px;background:#222"></div>
<div class="abs " style="left:6px;top:444px;width:268px;height:13px;background:#222"></div>
<div class="abs " style="left:255px;top:444px;width:4px;height:12px;background:linear-gradient(#aaa 0 1px,#999 1px)"></div>
<div class="abs raised" style="left:6px;top:444px;width:13px;height:13px;"></div>
<div class="abs" style="left:10px;top:447px"><svg width="4" height="7"><path d="M4 0V7L0 3.5Z" fill="#000"/></svg></div>
<div class="abs raised" style="left:20px;top:444px;width:234px;height:13px;"></div>
<div class="abs " style="left:133px;top:447px;width:1px;height:7px;background:#fff"></div>
<div class="abs " style="left:134px;top:447px;width:1px;height:7px;background:#555"></div>
<div class="abs " style="left:137px;top:447px;width:1px;height:7px;background:#fff"></div>
<div class="abs " style="left:138px;top:447px;width:1px;height:7px;background:#555"></div>
<div class="abs " style="left:141px;top:447px;width:1px;height:7px;background:#fff"></div>
<div class="abs " style="left:142px;top:447px;width:1px;height:7px;background:#555"></div>
<div class="abs raised" style="left:260px;top:444px;width:13px;height:13px;"></div>
<div class="abs" style="left:265px;top:447px"><svg width="4" height="7"><path d="M0 0V7L4 3.5Z" fill="#000"/></svg></div>
<div class="abs " style="left:274px;top:444px;width:14px;height:13px;background:#ccc"></div>
<div class="abs " style="left:5px;top:457px;width:284px;height:22px;background:#666;border:1px solid #222"></div>
<div class="abs" style="left:11px;top:467px"><svg width="6" height="4"><path d="M0 0H6L3 3.5Z" fill="#fff"/></svg></div>
<div class="abs" style="left:25px;top:460px"><svg width="16" height="15" viewBox="0 0 16 15" ><path d="M8.2 2.6C9.6 .6 14 .2 14.8 3C15.4 5.6 14.2 9.8 11.6 11.2C9.6 12.2 9.6 13.6 6.8 14.2C3.6 14.8 .4 13.4 .8 10.4C1.2 7.6 4.2 7.6 5.8 6.4C7.2 5.4 7.2 4 8.2 2.6Z" fill="#c48c5c" stroke="#000" stroke-width="1.3"/><ellipse cx="6.2" cy="8.6" rx="1.4" ry="1" fill="#303030"/><ellipse cx="11.6" cy="4.2" rx="2" ry="1.8" fill="#4c58e0"/><path d="M2.4 9.8L5.4 11.4L5 13L2.6 12Z" fill="#c81818"/><path d="M9.4 8L11.4 8.6L10 11.2L8.4 10.4Z" fill="#e0d060"/></svg></div>
<div class="abs t w b" style="left:44.7px;top:461.99px;letter-spacing:0;transform-origin:0 0;transform:scaleX(1.1253);">Palette</div>
<div class="abs" style="left:274px;top:463px"><svg width="10" height="10" viewBox="0 0 10 10" ><g shape-rendering="crispEdges"><rect x=".5" y=".5" width="9" height="9" fill="#666" stroke="#fff"/><rect x="2" y="7" width="1" height="1" fill="#fff"/><rect x="3" y="6" width="1" height="1" fill="#fff"/><rect x="4" y="5" width="1" height="1" fill="#fff"/><rect x="5" y="4" width="1" height="1" fill="#fff"/><rect x="6" y="3" width="1" height="1" fill="#fff"/><rect x="4" y="2" width="1" height="1" fill="#fff"/><rect x="5" y="2" width="1" height="1" fill="#fff"/><rect x="6" y="2" width="1" height="1" fill="#fff"/><rect x="7" y="2" width="1" height="1" fill="#fff"/><rect x="7" y="3" width="1" height="1" fill="#fff"/><rect x="7" y="4" width="1" height="1" fill="#fff"/><rect x="7" y="5" width="1" height="1" fill="#fff"/><rect x="6" y="4" width="1" height="1" fill="#fff"/></g></svg></div>
<div class="abs" style="left:13px;top:486px"><svg width="17" height="16" viewBox="0 0 17 16" ><defs><linearGradient id="g10" x1="0" y1="0" x2="1" y2="1"><stop offset="0" stop-color="#d89868"/><stop offset="1" stop-color="#8c5430"/></linearGradient></defs><path d="M1 5.5H5L6.5 7H11.5V14.5H1Z" fill="#e4e080" stroke="#000" stroke-width="1.1" stroke-linejoin="round"/><path d="M1.5 14.5L5 9.5H16L12 14.5Z" fill="url(#g10)" stroke="#000" stroke-width="1.1" stroke-linejoin="round"/><path d="M9 3.2C10.5 1 13.5 1.2 14.6 4.5" fill="none" stroke="#000" stroke-width="1.1"/><path d="M12.6 4.2L14.8 5.8L15.8 3" fill="none" stroke="#000" stroke-width="1.1"/></svg></div>
<div class="abs" style="left:39px;top:487px"><svg width="14" height="14" viewBox="0 0 14 14" ><rect x=".6" y=".6" width="12.8" height="12.8" rx="1.5" fill="#7474b8" stroke="#101020" stroke-width="1.2"/><rect x="1.6" y="1.6" width="10.8" height="10.8" rx="1" fill="none" stroke="#9c9cd8" stroke-width=".8"/><path d="M3.8 3.8L10.2 10.2M10.2 3.8L3.8 10.2" stroke="#fff" stroke-width="2.4"/></svg></div>
<div class="abs " style="left:62px;top:483px;width:221px;height:21px;background:#777"></div>
<div class="abs " style="left:63px;top:484px;width:220px;height:20px;background:#000"></div>
<div class="abs " style="left:64px;top:485px;width:218px;height:18px;background:#ececec;border-top:1px solid #fff;border-left:1px solid #fff"></div>
<div class="abs " style="left:62px;top:504px;width:222px;height:1px;background:#fff"></div>
<div class="abs " style="left:283px;top:483px;width:1px;height:22px;background:#fff"></div>
<div class="abs " style="left:264px;top:485px;width:1px;height:18px;background:#fff"></div>
<div class="abs " style="left:265px;top:485px;width:1px;height:18px;background:#000"></div>
<div class="abs raised" style="left:266px;top:485px;width:16px;height:18px;"></div>
<div class="abs" style="left:270px;top:492px"><svg width="7" height="4"><path d="M0 0H7L3.5 3.7Z" fill="#000"/></svg></div>
<div class="abs" style="left:67px;top:487px"><svg width="13" height="15" viewBox="0 0 13 15" ><defs><linearGradient id="g20" x1="0" y1="0" x2="1" y2="0"><stop offset="0" stop-color="#a8a8d8"/><stop offset="0.4" stop-color="#f8f8ff"/><stop offset="1" stop-color="#a0a0d0"/></linearGradient></defs><rect x="3" y=".6" width="7" height="2.4" fill="#e8e0a0" stroke="#605820" stroke-width=".9"/><path d="M2.5 3.2H10.5C12 4 12.4 5 12.4 6.5V12.5C12.4 13.8 11.5 14.4 10.5 14.4H2.5C1.5 14.4 .6 13.8 .6 12.5V6.5C.6 5 1 4 2.5 3.2Z" fill="url(#g20)" stroke="#303048" stroke-width="1"/></svg></div>
<div class="abs t " style="left:85.8px;top:487.99px;letter-spacing:0;transform-origin:0 0;transform:scaleX(0.9569);">vykonProGuestBook</div>
<div class="abs " style="left:6px;top:510px;width:282px;height:1px;background:#222"></div>
<div class="abs " style="left:6px;top:511px;width:267px;height:29px;background:#ececec"></div>
<div class="abs " style="left:273px;top:511px;width:1px;height:29px;background:#fff"></div>
<div class="abs " style="left:274px;top:511px;width:1px;height:29px;background:#222"></div>
<div class="abs " style="left:275px;top:511px;width:13px;height:29px;background:#333"></div>
<div class="abs raised" style="left:275px;top:511px;width:13px;height:13px;"></div>
<div class="abs" style="left:278px;top:515px"><svg width="7" height="4"><path d="M0 4H7L3.5 0Z" fill="#000"/></svg></div>
<div class="abs raised" style="left:275px;top:527px;width:13px;height:13px;"></div>
<div class="abs" style="left:278px;top:532px"><svg width="7" height="4"><path d="M0 0H7L3.5 4Z" fill="#000"/></svg></div>
<div class="abs " style="left:5px;top:540px;width:284px;height:1px;background:#222"></div>
<div class="abs " style="left:5px;top:541px;width:285px;height:1px;background:#fff"></div>
<div class="abs" style="left:9px;top:516px"><svg width="9" height="9"><rect x=".5" y=".5" width="8" height="8" fill="#fff" stroke="#999" stroke-dasharray="1 1"/><path d="M2 4.5H7 M4.5 2V7" stroke="#000" stroke-width="1" fill="none" shape-rendering="crispEdges"/></svg></div>
<div class="abs" style="left:22px;top:512px"><svg width="16" height="16" viewBox="0 0 16 16" ><path fill-rule="evenodd" d="M2 6.9L4.6 .5H6.3L8.9 6.9H7.2L6.75 5.6H4.15L3.7 6.9ZM4.6 4.3H6.3L5.45 1.9Z" fill="#5454a4"/><path d="M2.2 8.3H8.1V9.5L4.3 13.4H8.3V14.7H2V13.5L5.8 9.6H2.2Z" fill="#6c6424"/><path d="M12 2.2H13.3V10.2H15.9L12.65 13.9L9.4 10.2H12Z" fill="#5454a4"/></svg></div>
<div class="abs t " style="left:41.6px;top:513.99px;letter-spacing:0;transform-origin:0 0;transform:scaleX(0.9348);">GuestBook</div>
<div class="abs " style="left:292px;top:321px;width:1px;height:1px;background:#666"></div>
<div class="abs " style="left:293px;top:321px;width:1px;height:1px;background:#999"></div>
<div class="abs " style="left:292px;top:322px;width:1px;height:1px;background:#999"></div>
<div class="abs " style="left:293px;top:322px;width:1px;height:1px;background:#fff"></div>
<div class="abs " style="left:292px;top:325px;width:1px;height:1px;background:#666"></div>
<div class="abs " style="left:293px;top:325px;width:1px;height:1px;background:#999"></div>
<div class="abs " style="left:292px;top:326px;width:1px;height:1px;background:#999"></div>
<div class="abs " style="left:293px;top:326px;width:1px;height:1px;background:#fff"></div>
<div class="abs " style="left:292px;top:329px;width:1px;height:1px;background:#666"></div>
<div class="abs " style="left:293px;top:329px;width:1px;height:1px;background:#999"></div>
<div class="abs " style="left:292px;top:330px;width:1px;height:1px;background:#999"></div>
<div class="abs " style="left:293px;top:330px;width:1px;height:1px;background:#fff"></div>
<div class="abs" style="left:306px;top:118px"><svg width="6" height="9"><path d="M0 0V9L5.5 4.5Z" fill="#444490"/></svg></div>
<div class="abs " style="left:324px;top:112px;width:1px;height:22px;background:#888"></div>
<div class="abs " style="left:325px;top:112px;width:1px;height:22px;background:#fff"></div>
<div class="abs " style="left:331px;top:113px;width:110px;height:19px;background:#777"></div>
<div class="abs " style="left:332px;top:114px;width:109px;height:18px;background:#000"></div>
<div class="abs " style="left:333px;top:115px;width:107px;height:16px;background:#ececec;border-top:1px solid #fff;border-left:1px solid #fff"></div>
<div class="abs " style="left:331px;top:132px;width:111px;height:1px;background:#fff"></div>
<div class="abs " style="left:441px;top:113px;width:1px;height:20px;background:#fff"></div>
<div class="abs " style="left:422px;top:115px;width:1px;height:16px;background:#fff"></div>
<div class="abs " style="left:423px;top:115px;width:1px;height:16px;background:#000"></div>
<div class="abs raised" style="left:424px;top:115px;width:16px;height:16px;"></div>
<div class="abs" style="left:428px;top:121px"><svg width="7" height="4"><path d="M0 0H7L3.5 3.7Z" fill="#000"/></svg></div>
<div class="abs t " style="left:335.2px;top:116.99px;letter-spacing:0;transform-origin:0 0;transform:scaleX(0.9276);">Time Range</div>
<div class="abs t " style="left:449.6px;top:116.99px;letter-spacing:0;transform-origin:0 0;transform:scaleX(0.9529);">25-Mar-10 8:35 PM EDT&nbsp; to&nbsp; ?</div>
<div class="abs" style="left:602px;top:115px"><svg width="16" height="16" viewBox="0 0 16 16" ><defs><linearGradient id="g21" x1="0" y1="0" x2="1" y2="1"><stop offset="0" stop-color="#d0dcf4"/><stop offset="1" stop-color="#98b0dc"/></linearGradient></defs><circle cx="8" cy="7.9" r="6.4" fill="url(#g21)" stroke="#000" stroke-width="1.3"/><path d="M7.6 3.6V8.3H11.6" fill="none" stroke="#000" stroke-width="1.4"/></svg></div>
<div class="abs " style="left:296px;top:141px;width:782px;height:400px;background:#777"></div>
<div class="abs " style="left:297px;top:142px;width:781px;height:399px;background:#000"></div>
<div class="abs " style="left:298px;top:143px;width:779px;height:397px;background:#ececec"></div>
<div class="abs " style="left:1078px;top:141px;width:1px;height:401px;background:#fff"></div>
<div class="abs " style="left:298px;top:539px;width:779px;height:1px;background:#fff"></div>
<div class="abs " style="left:1076px;top:178px;width:1px;height:362px;background:#fff"></div>
<div class="abs " style="left:296px;top:541px;width:783px;height:1px;background:#fff"></div>
<div class="abs " style="left:298px;top:143px;width:779px;height:17px;background:#666"></div>
<div class="abs t w b" style="left:302.0px;top:145.64px;letter-spacing:0;transform-origin:0 0;transform:scaleX(1.0459);font-size:12px">/guestBookTest/</div>
<div class="abs t w b" style="left:399.7px;top:145.64px;letter-spacing:0;transform-origin:0 0;transform:scaleX(0.9609);font-size:12px">vykon_GuestBook</div>
<div class="abs t w b" style="left:1019.4px;top:145.14px;letter-spacing:0;transform-origin:0 0;transform:scaleX(0.9730);font-size:12px">2 records</div>
<div class="abs " style="left:298px;top:160px;width:779px;height:1px;background:#222"></div>
<div class="abs hc" style="left:298px;top:161px;width:142px;height:17px;"></div>
<div class="abs t b" style="left:301.0px;top:162.99px;letter-spacing:0;transform-origin:0 0;transform:scaleX(1.0888);">Timestamp</div>
<div class="abs hc" style="left:440px;top:161px;width:141px;height:17px;"></div>
<div class="abs t b" style="left:443.3px;top:162.99px;letter-spacing:0;transform-origin:0 0;transform:scaleX(1.0669);">Timestamp Out</div>
<div class="abs hc" style="left:581px;top:161px;width:49px;height:17px;"></div>
<div class="abs t b" style="left:584.5px;top:162.99px;letter-spacing:0;transform-origin:0 0;transform:scaleX(1.0356);">Badge</div>
<div class="abs hc" style="left:630px;top:161px;width:73px;height:17px;"></div>
<div class="abs t b" style="left:633.7px;top:162.99px;letter-spacing:0;transform-origin:0 0;transform:scaleX(1.0474);">Last Name</div>
<div class="abs hc" style="left:703px;top:161px;width:74px;height:17px;"></div>
<div class="abs t b" style="left:706.5px;top:162.99px;letter-spacing:0;transform-origin:0 0;transform:scaleX(1.0515);">First Name</div>
<div class="abs hc" style="left:777px;top:161px;width:90px;height:17px;"></div>
<div class="abs t b" style="left:780.2px;top:162.99px;letter-spacing:0;transform-origin:0 0;transform:scaleX(1.0841);">Representing</div>
<div class="abs hc" style="left:867px;top:161px;width:197px;height:17px;"></div>
<div class="abs t b" style="left:870.3px;top:162.99px;letter-spacing:0;transform-origin:0 0;transform:scaleX(1.0292);">Visiting</div>
<div class="abs hc" style="left:1064px;top:161px;width:13px;height:17px;"></div>
<div class="abs" style="left:1067px;top:164px"><svg width="8" height="10" viewBox="0 0 8 10" ><g shape-rendering="crispEdges"><rect x=".5" y=".5" width="7" height="6" fill="none" stroke="#000"/><path d="M0.5 3.5H7.5M4 0.5V6" stroke="#000"/><path d="M2 6.5H7L4.5 9.5Z" fill="#000"/></g></svg></div>
<div class="abs t " style="left:299.6px;top:179.99px;letter-spacing:0;transform-origin:0 0;transform:scaleX(0.9590);">25-Mar-10 8:35:17 PM EDT</div>
<div class="abs t " style="left:441.5px;top:179.99px;letter-spacing:0;transform-origin:0 0;transform:scaleX(0.9471);">null</div>
<div class="abs t " style="left:583.2px;top:179.99px;letter-spacing:0;transform-origin:0 0;transform:scaleX(0.9468);">V1258</div>
<div class="abs t " style="left:632.6px;top:179.99px;letter-spacing:0;transform-origin:0 0;transform:scaleX(0.9116);">Doe</div>
<div class="abs t " style="left:705.4px;top:179.99px;letter-spacing:0;transform-origin:0 0;transform:scaleX(0.9552);">John</div>
<div class="abs t " style="left:779.5px;top:179.99px;letter-spacing:0;transform-origin:0 0;transform:scaleX(0.9132);">XYZ Zippers</div>
<div class="abs t " style="left:869.2px;top:179.99px;letter-spacing:0;transform-origin:0 0;transform:scaleX(0.9127);">Sales</div>
<div class="abs " style="left:298px;top:194px;width:779px;height:1px;background:#d4d4d4"></div>
<div class="abs t " style="left:299.6px;top:196.99px;letter-spacing:0;transform-origin:0 0;transform:scaleX(0.9590);">25-Mar-10 8:38:22 PM EDT</div>
<div class="abs t " style="left:441.5px;top:196.99px;letter-spacing:0;transform-origin:0 0;transform:scaleX(0.9553);">25-Mar-10 8:43:50 PM EDT</div>
<div class="abs t " style="left:583.2px;top:196.99px;letter-spacing:0;transform-origin:0 0;transform:scaleX(0.9468);">V1280</div>
<div class="abs t " style="left:632.6px;top:196.99px;letter-spacing:0;transform-origin:0 0;transform:scaleX(0.9038);">Smith</div>
<div class="abs t " style="left:705.4px;top:196.99px;letter-spacing:0;transform-origin:0 0;transform:scaleX(0.9552);">Jane</div>
<div class="abs t " style="left:779.5px;top:196.99px;letter-spacing:0;transform-origin:0 0;transform:scaleX(0.9694);">A1 Janitorial</div>
<div class="abs t " style="left:869.2px;top:196.99px;letter-spacing:0;transform-origin:0 0;transform:scaleX(0.9442);">Human Resources</div>
<div class="abs " style="left:298px;top:211px;width:779px;height:1px;background:#d4d4d4"></div>
<div class="abs " style="left:439px;top:178px;width:1px;height:34px;background:#d4d4d4"></div>
<div class="abs " style="left:580px;top:178px;width:1px;height:34px;background:#d4d4d4"></div>
<div class="abs " style="left:629px;top:178px;width:1px;height:34px;background:#d4d4d4"></div>
<div class="abs " style="left:702px;top:178px;width:1px;height:34px;background:#d4d4d4"></div>
<div class="abs " style="left:776px;top:178px;width:1px;height:34px;background:#d4d4d4"></div>
<div class="abs " style="left:866px;top:178px;width:1px;height:34px;background:#d4d4d4"></div>
</body></html>
